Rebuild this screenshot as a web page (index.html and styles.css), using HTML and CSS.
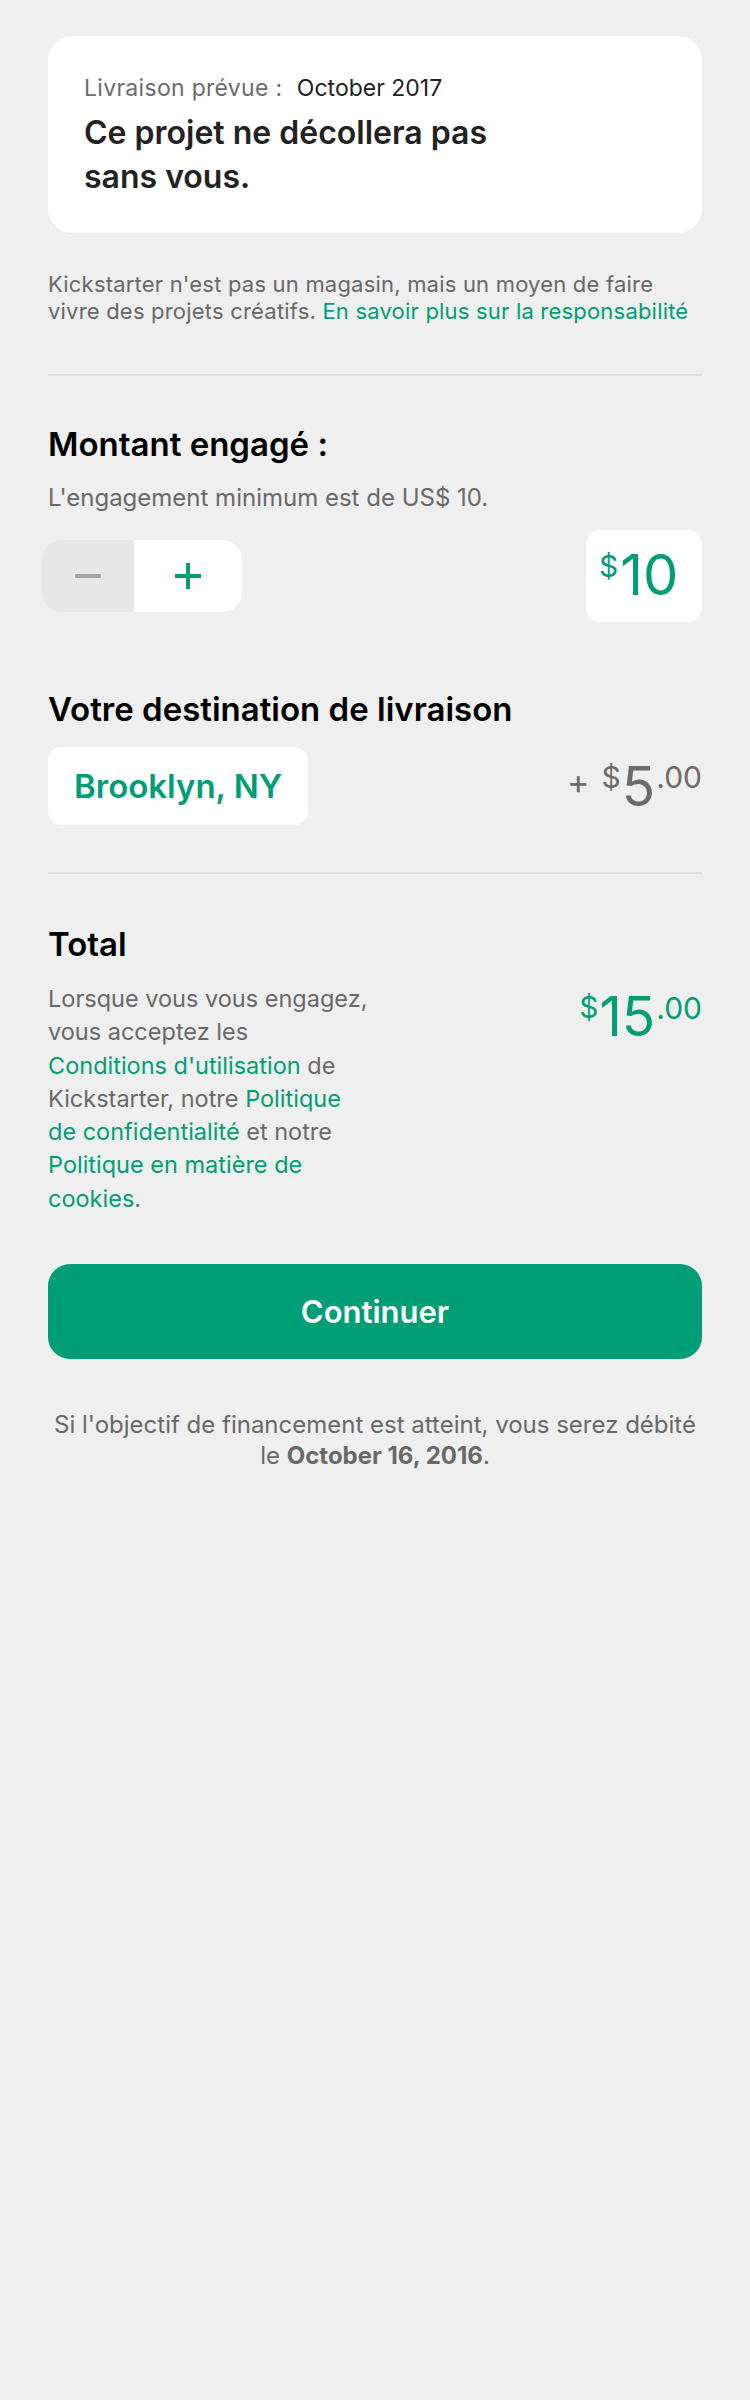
FILE: index.html
```html
<!DOCTYPE html>
<html lang="fr">
<head>
<meta charset="utf-8">
<title>Engagement</title>
<link rel="stylesheet" href="styles.css">
</head>
<body>
<main class="page">
  <section class="card">
    <p class="delivery"><span class="delivery-label">Livraison prévue :</span> <span class="delivery-date">October 2017</span></p>
    <h1 class="card-title">Ce projet ne décollera pas sans vous.</h1>
  </section>

  <p class="note">Kickstarter n'est pas un magasin, mais un moyen de faire vivre des projets créatifs. <a class="link" href="#">En savoir plus sur la responsabilité</a></p>

  <hr class="divider divider-first">

  <h2 class="heading heading-pledge">Montant engagé :</h2>
  <p class="sub">L'engagement minimum est de US$ 10.</p>

  <div class="pledge-row">
    <div class="stepper">
      <button class="step step-minus" aria-label="Moins">
        <svg width="26" height="4" viewBox="0 0 26 4"><rect x="0" y="0" width="26" height="4" fill="#a3a3a3"/></svg>
      </button>
      <button class="step step-plus" aria-label="Plus">
        <svg width="26" height="26" viewBox="0 0 26 26"><rect x="11" y="0" width="4" height="26" fill="#009e74"/><rect x="0" y="11" width="26" height="4" fill="#009e74"/></svg>
      </button>
    </div>
    <div class="amount-box">
      <span class="cur">$</span><span class="big big-10">10</span>
    </div>
  </div>

  <h2 class="heading heading-ship">Votre destination de livraison</h2>
  <div class="ship-row">
    <div class="location">Brooklyn, NY</div>
    <div class="price price-gray">
      <span class="plus-sign">+</span><span class="cur">$</span><span class="big">5</span><span class="cents">.00</span>
    </div>
  </div>

  <hr class="divider divider-second">

  <h2 class="heading heading-total">Total</h2>
  <div class="total-row">
    <p class="terms">Lorsque vous vous engagez,<br>vous acceptez les<br><a class="link" href="#">Conditions d'utilisation</a> de<br>Kickstarter, notre <a class="link" href="#">Politique<br>de confidentialité</a> et notre<br><a class="link" href="#">Politique en matière de<br>cookies</a>.</p>
    <div class="price price-green">
      <span class="cur">$</span><span class="big">15</span><span class="cents">.00</span>
    </div>
  </div>

  <button class="continue">Continuer</button>

  <p class="footer">Si l'objectif de financement est atteint, vous serez débité le <strong>October 16, 2016</strong>.</p>
</main>
</body>
</html>
```

FILE: styles.css
```css
html, body {
  margin: 0;
  padding: 0;
  background: #efefef;
}

body {
  font-family: Inter, "Noto Sans", sans-serif;
  color: #686868;
}

.page {
  display: flex;
  flex-direction: column;
  padding: 36px 48px 0 48px;
}

p, h1, h2 {
  margin: 0;
}

.card {
  background: #fff;
  border-radius: 24px;
  padding: 38px 36px 34px 36px;
}

.delivery {
  font-size: 23px;
  line-height: 28px;
}

.delivery-label {
  color: #6b6b6b;
  letter-spacing: 0.3px;
}

.delivery-date {
  color: #222;
  margin-left: 8px;
}

.card-title {
  margin-top: 9px;
  max-width: 440px;
  font-size: 32px;
  line-height: 44px;
  font-weight: 600;
  color: #222;
}

.note {
  margin-top: 38px;
  font-size: 22px;
  line-height: 27px;
  color: #686868;
  letter-spacing: 0.2px;
}

.link {
  color: #009e74;
  text-decoration: none;
}

.divider {
  border: 0;
  height: 2px;
  background: #dcdcdc;
  margin: 0;
  width: 100%;
}

.divider-first {
  margin-top: 49px;
}

.heading {
  font-size: 33px;
  line-height: 36px;
  font-weight: 600;
  color: #000;
}

.heading-pledge {
  margin-top: 50px;
}

.sub {
  margin-top: 22px;
  font-size: 24px;
  line-height: 28px;
  color: #686868;
}

.pledge-row {
  margin-top: 18px;
  display: flex;
  align-items: center;
  justify-content: space-between;
}

.stepper {
  display: flex;
  height: 72px;
  margin-left: -6px;
  border-radius: 20px;
  overflow: hidden;
}

.step {
  border: 0;
  padding: 0;
  margin: 0;
  display: flex;
  align-items: center;
  justify-content: center;
  height: 100%;
}

.step-minus {
  width: 92px;
  background: #e7e7e7;
}

.step-plus {
  width: 108px;
  background: #fff;
}

.amount-box {
  width: 116px;
  height: 92px;
  box-sizing: border-box;
  background: #fff;
  border-radius: 14px;
  display: flex;
  align-items: flex-start;
  padding: 17px 0 0 13px;
  color: #009e74;
}

.cur, .big, .cents, .plus-sign {
  line-height: 1;
  display: block;
  font-weight: 400;
}

.cur {
  font-size: 30px;
  margin-top: 3.4px;
}

.big {
  font-size: 55px;
  margin-left: 1px;
}

.big-10 {
  font-size: 56px;
  margin-left: 2px;
}

.amount-box .cur {
  margin-top: 3.6px;
}

.cents {
  font-size: 30px;
  margin-top: 3.6px;
  margin-left: 1px;
}

.heading-ship {
  margin-top: 69px;
}

.ship-row {
  margin-top: 20px;
  display: flex;
  align-items: center;
  justify-content: space-between;
}

.location {
  height: 78px;
  box-sizing: border-box;
  background: #fff;
  border-radius: 14px;
  padding: 0 26px;
  display: flex;
  align-items: center;
  font-size: 33px;
  font-weight: 600;
  color: #009e74;
}

.price {
  display: flex;
  align-items: flex-start;
}

.price-gray {
  color: #6b6b6b;
}

.price-green {
  color: #009e74;
}

.plus-sign {
  font-size: 34px;
  margin-top: 6px;
  margin-right: 12px;
}

.heading-total {
  margin-top: 52px;
}

.divider-second {
  margin-top: 47px;
}

.total-row {
  margin-top: 20px;
  display: flex;
  justify-content: space-between;
  align-items: flex-start;
}

.terms {
  font-size: 23.5px;
  line-height: 33.3px;
  color: #686868;
}

.total-row .price {
  margin-top: 7px;
}

.continue {
  margin-top: 49px;
  height: 95px;
  border: 0;
  border-radius: 22px;
  background: #009e74;
  color: #fff;
  font-family: Inter, "Noto Sans", sans-serif;
  font-size: 31px;
  font-weight: 600;
}

.footer {
  margin-top: 50px;
  text-align: center;
  font-size: 24px;
  line-height: 31px;
  color: #686868;
}

.footer strong {
  font-weight: 700;
}
```
